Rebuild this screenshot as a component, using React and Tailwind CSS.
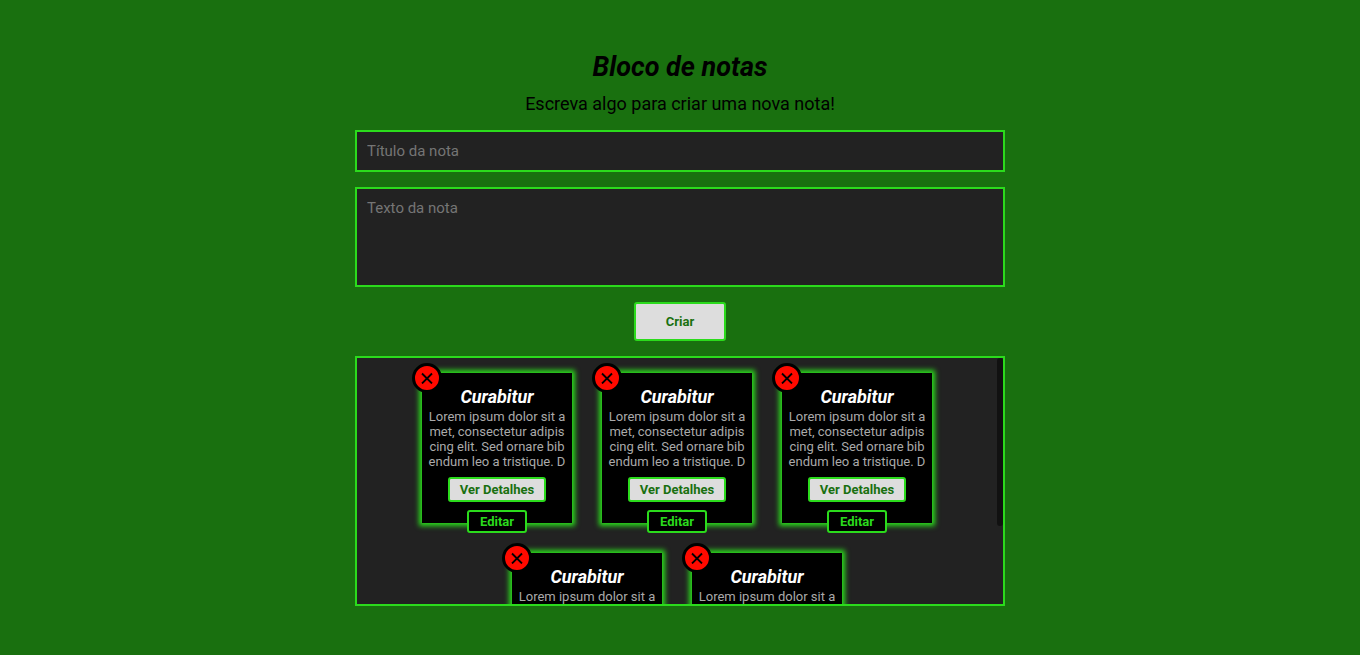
import { useState } from "react";

const BODY =
  "Lorem ipsum dolor sit amet, consectetur adipiscing elit. Sed ornare bibendum leo a tristique. D";

const initialNotes = [1, 2, 3, 4, 5].map((id) => ({
  id,
  title: "Curabitur",
  text: BODY,
}));

function Note({ note, onRemove }) {
  return (
    <article className="relative flex size-[150px] flex-col items-center bg-black px-[5px] pt-[13px] shadow-[0_0_5px_3px_#2bdb1c]">
      <button
        type="button"
        aria-label="Excluir nota"
        onClick={onRemove}
        className="absolute -left-[10px] -top-[10px] flex size-[30px] items-center justify-center rounded-full border-[3px] border-black bg-[#ff0a00]"
      >
        <svg viewBox="0 0 12 12" className="size-3" fill="none" stroke="#000" strokeWidth="1.8">
          <path d="M1 1.5 11 11.5M11 1.5 1 11.5" />
        </svg>
      </button>
      <h2 className="text-[18px] font-bold italic leading-[22px] text-white">{note.title}</h2>
      <p className="mt-px h-[60px] w-full overflow-hidden break-all text-center text-[13px] leading-[15px] text-[#aaaaaa]">
        {note.text}
      </p>
      <button
        type="button"
        className="mt-2 h-[25px] rounded-[3px] border-2 border-[#2bdb1c] bg-[#dddddd] px-[10px] text-[13px] font-bold leading-[15px] text-[#19700f]"
      >
        Ver Detalhes
      </button>
      <button
        type="button"
        className="absolute -bottom-[10px] left-1/2 h-[23px] w-[60px] -translate-x-1/2 rounded-[3px] border-2 border-[#2bdb1c] bg-black text-[13px] font-bold leading-[15px] text-[#2bdb1c]"
      >
        Editar
      </button>
    </article>
  );
}

export default function App() {
  const [notes, setNotes] = useState(initialNotes);
  const [title, setTitle] = useState("");
  const [text, setText] = useState("");
  const [scroll, setScroll] = useState(0);

  function create(event) {
    event.preventDefault();
    if (!title || !text) return;
    setNotes([...notes, { id: Date.now(), title, text }]);
    setTitle("");
    setText("");
  }

  return (
    <main className="flex min-h-screen flex-col items-center justify-center bg-[#19700f] font-[Roboto,sans-serif] text-black">
      <div className="flex w-full max-w-[650px] flex-col items-center">
        <h1 className="text-[27px] font-bold italic leading-9">Bloco de notas</h1>
        <p className="mt-2 text-[18px] leading-[22px]">Escreva algo para criar uma nova nota!</p>
        <form onSubmit={create} className="mt-[15px] flex w-full flex-col items-center gap-[15px]">
          <input
            aria-label="Título da nota"
            placeholder="Título da nota"
            value={title}
            onChange={(e) => setTitle(e.target.value)}
            className="h-[42px] w-full border-2 border-[#2bdb1c] bg-[#222222] px-[10px] text-[15px] text-[#dddddd] outline-none placeholder:text-[#757575]"
          />
          <textarea
            aria-label="Texto da nota"
            placeholder="Texto da nota"
            value={text}
            onChange={(e) => setText(e.target.value)}
            className="h-[100px] w-full resize-none border-2 border-[#2bdb1c] bg-[#222222] p-[10px] text-[15px] leading-[18px] text-[#dddddd] outline-none placeholder:text-[#757575]"
          />
          <button
            type="submit"
            className="h-[39px] rounded-[3px] border-2 border-[#2bdb1c] bg-[#dddddd] px-[30px] text-[13px] font-bold text-[#19700f]"
          >
            Criar
          </button>
        </form>
        <section
          aria-label="Notas"
          className="relative mt-[15px] w-full border-2 border-[#2bdb1c] bg-[#222222]"
        >
          <div
            onScroll={(e) => setScroll(e.currentTarget.scrollTop / e.currentTarget.scrollHeight)}
            className="flex h-[246px] w-full flex-wrap justify-center gap-[30px] overflow-y-auto py-[15px] pr-[6px] [scrollbar-width:none]"
          >
            {notes.map((note) => (
              <Note
                key={note.id}
                note={note}
                onRemove={() => setNotes(notes.filter((n) => n.id !== note.id))}
              />
            ))}
          </div>
          <span
            aria-hidden="true"
            style={{ top: `${scroll * 100}%` }}
            className="absolute right-0 h-[168px] w-[6px] rounded-[3px] bg-[#111111]"
          />
        </section>
      </div>
    </main>
  );
}
